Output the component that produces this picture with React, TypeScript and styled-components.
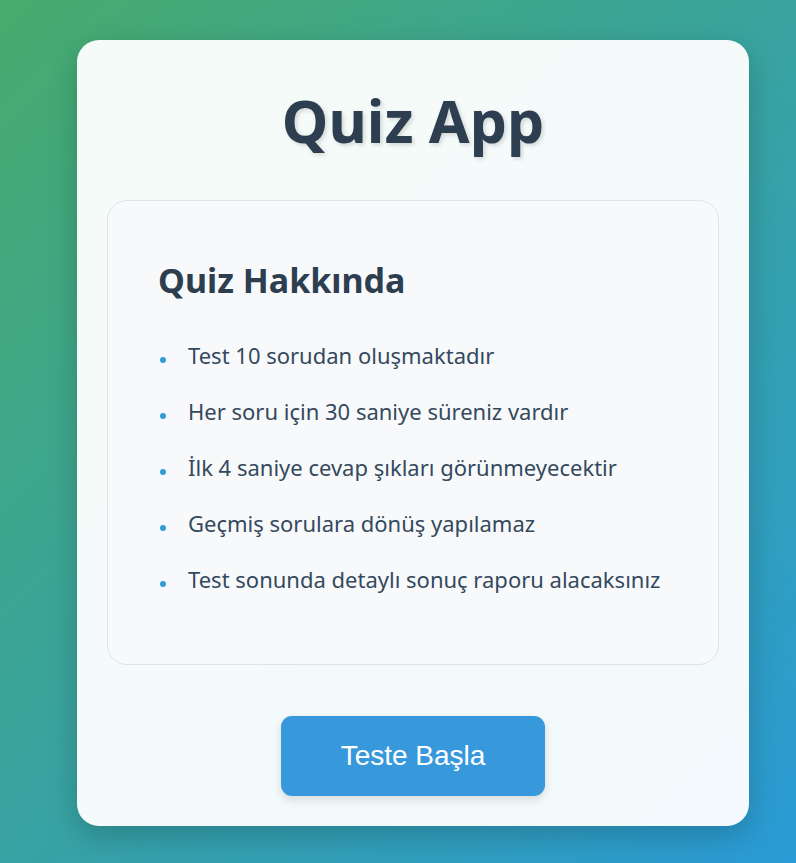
import React from 'react';
import styled, { createGlobalStyle } from 'styled-components';

const GlobalStyle = createGlobalStyle`
	* {
		box-sizing: border-box;
	}
	html, body {
		margin: 0;
		padding: 0;
	}
	body {
		min-height: 863px;
		background: linear-gradient(135deg, #47ab6c 0%, #2a9bd6 100%);
		font-family: 'Noto Sans', 'Open Sans', sans-serif;
	}
`;

const Page = styled.div`
	min-height: 863px;
	padding: 40px 0 0 77px;
`;

const Card = styled.div`
	width: 672px;
	height: 786px;
	padding: 30px;
	border-radius: 22px;
	background: rgba(255, 255, 255, 0.95);
	box-shadow: 0 10px 30px rgba(0, 0, 0, 0.2);
	display: flex;
	flex-direction: column;
	align-items: center;
`;

const Title = styled.h1`
	margin: 10px 0 0;
	font-size: 59px;
	line-height: 80px;
	font-weight: 700;
	color: #2c3e50;
	text-shadow: 2px 2px 4px rgba(0, 0, 0, 0.15);
`;

const InfoBox = styled.div`
	align-self: stretch;
	margin-top: 40px;
	height: 465px;
	padding: 56px 50px 0;
	background: #f8f9fa;
	border: 1px solid #dfe3e6;
	border-radius: 20px;
`;

const InfoTitle = styled.h2`
	margin: 0 0 36px;
	font-size: 34px;
	line-height: 46px;
	font-weight: 700;
	color: #2c3e50;
`;

const RuleList = styled.ul`
	list-style: none;
	margin: 0;
	padding: 0;
	display: flex;
	flex-direction: column;
	gap: 24px;
`;

const Rule = styled.li`
	display: flex;
	align-items: baseline;
	gap: 22px;
	font-size: 22px;
	line-height: 32px;
	color: #34495e;
`;

const Dot = styled.span`
	flex: none;
	width: 6px;
	height: 6px;
	border-radius: 50%;
	background: #3498db;
	margin-left: 2px;
	transform: translateY(-1px);
`;

const StartButton = styled.button`
	margin-top: 51px;
	width: 264px;
	height: 80px;
	border: none;
	border-radius: 11px;
	background: #3799db;
	color: #ffffff;
	font-family: 'Liberation Sans', Arial, sans-serif;
	font-size: 28px;
	box-shadow: 0 4px 10px rgba(0, 0, 0, 0.12);
	cursor: pointer;
`;

const rules = [
	'Test 10 sorudan oluşmaktadır',
	'Her soru için 30 saniye süreniz vardır',
	'İlk 4 saniye cevap şıkları görünmeyecektir',
	'Geçmiş sorulara dönüş yapılamaz',
	'Test sonunda detaylı sonuç raporu alacaksınız',
];

const App = () => (
	<Page>
		<GlobalStyle />
		<Card>
			<Title>Quiz App</Title>
			<InfoBox>
				<InfoTitle>Quiz Hakkında</InfoTitle>
				<RuleList>
					{rules.map((rule) => (
						<Rule key={rule}>
							<Dot />
							<span>{rule}</span>
						</Rule>
					))}
				</RuleList>
			</InfoBox>
			<StartButton>Teste Başla</StartButton>
		</Card>
	</Page>
);

export default App;
